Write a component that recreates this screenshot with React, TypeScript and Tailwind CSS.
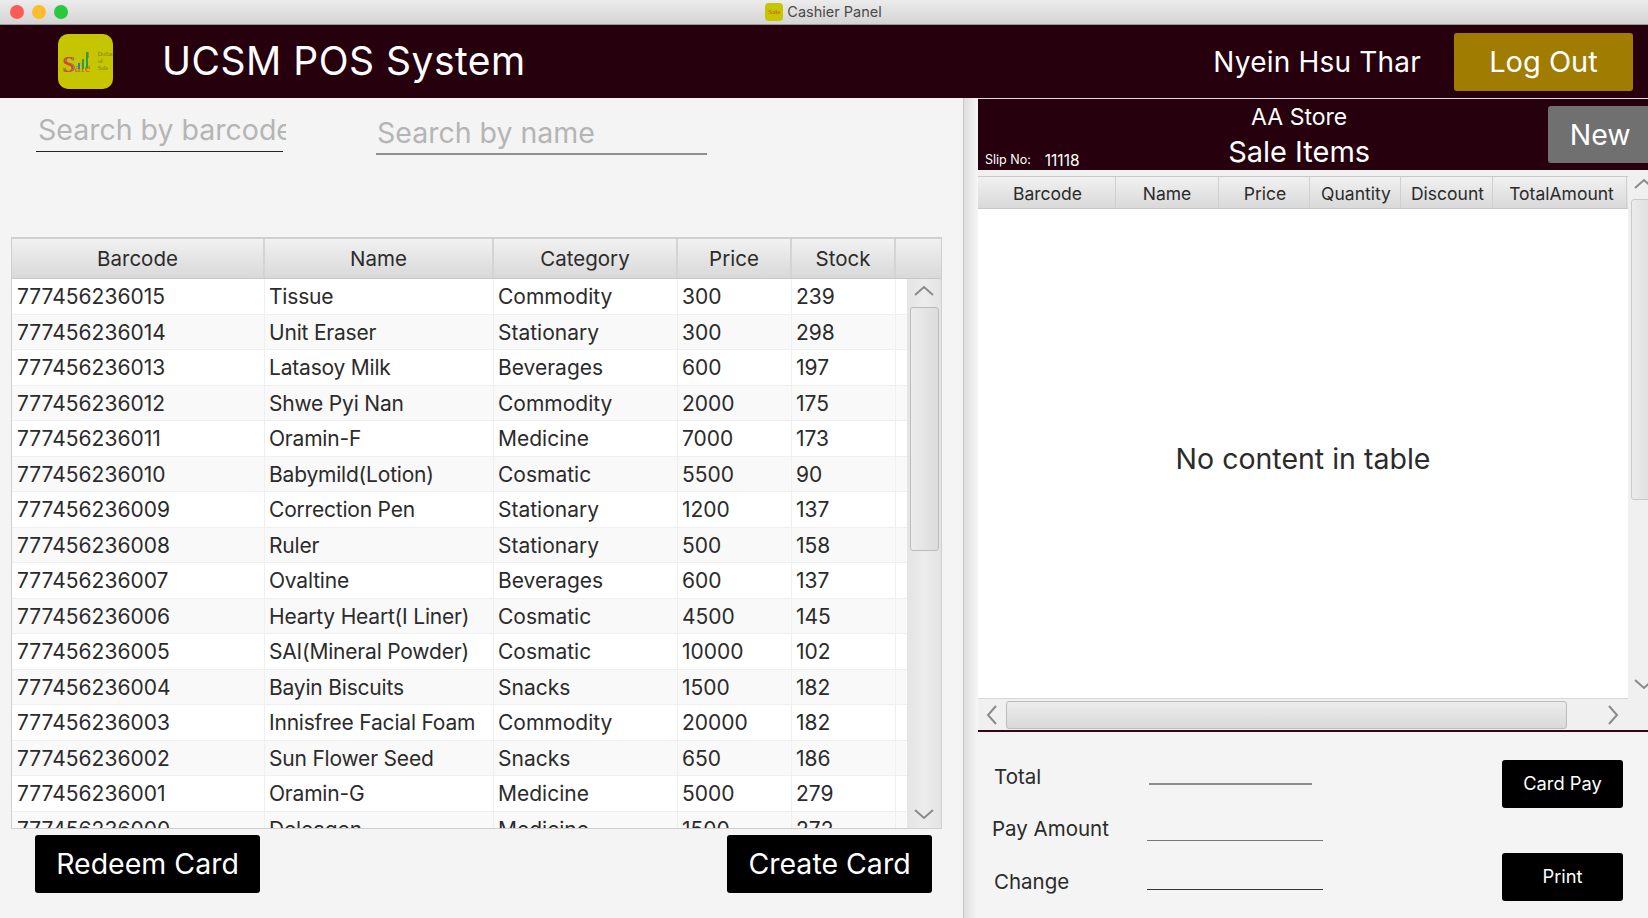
const PRODUCTS = [
  ["777456236015", "Tissue", "Commodity", "300", "239"],
  ["777456236014", "Unit Eraser", "Stationary", "300", "298"],
  ["777456236013", "Latasoy Milk", "Beverages", "600", "197"],
  ["777456236012", "Shwe Pyi Nan", "Commodity", "2000", "175"],
  ["777456236011", "Oramin-F", "Medicine", "7000", "173"],
  ["777456236010", "Babymild(Lotion)", "Cosmatic", "5500", "90"],
  ["777456236009", "Correction Pen", "Stationary", "1200", "137"],
  ["777456236008", "Ruler", "Stationary", "500", "158"],
  ["777456236007", "Ovaltine", "Beverages", "600", "137"],
  ["777456236006", "Hearty Heart(I Liner)", "Cosmatic", "4500", "145"],
  ["777456236005", "SAI(Mineral Powder)", "Cosmatic", "10000", "102"],
  ["777456236004", "Bayin Biscuits", "Snacks", "1500", "182"],
  ["777456236003", "Innisfree Facial Foam", "Commodity", "20000", "182"],
  ["777456236002", "Sun Flower Seed", "Snacks", "650", "186"],
  ["777456236001", "Oramin-G", "Medicine", "5000", "279"],
  ["777456236000", "Deleagon", "Medicine", "1500", "272"],
];

const LEFT_COLS = ["w-[253px]", "w-[229px]", "w-[184px]", "w-[114px]", "w-[104px]"];
const LEFT_HEAD = ["Barcode", "Name", "Category", "Price", "Stock"];
const SALE_COLS = [
  ["Barcode", "w-[138px] pl-[2px]"],
  ["Name", "w-[103px]"],
  ["Price", "w-[91px] pl-[2px]"],
  ["Quantity", "w-[91px] pl-[2px]"],
  ["Discount", "w-[92px] pl-[2px]"],
  ["TotalAmount", "w-[134px] pl-[4px]"],
];

// native looking scrollbar arrows, wider and flatter than the lucide chevrons
function ArrowV({ down, className }: { down?: boolean; className?: string }) {
  return (
    <svg width="20" height="12" viewBox="0 0 20 12" className={`shrink-0 ${className ?? ""}`}>
      <path d={down ? "M1 2 L10 10 L19 2" : "M1 10 L10 2 L19 10"} fill="none" stroke="#8a8a8a" strokeWidth="2" />
    </svg>
  );
}

function ArrowH({ right, className }: { right?: boolean; className?: string }) {
  return (
    <svg width="12" height="20" viewBox="0 0 12 20" className={`shrink-0 ${className ?? ""}`}>
      <path d={right ? "M2 1 L10 10 L2 19" : "M10 1 L2 10 L10 19"} fill="none" stroke="#8a8a8a" strokeWidth="2" />
    </svg>
  );
}

function Logo() {
  return (
    <div className="w-[55px] h-[55px] rounded-[10px] bg-[#c6c600] flex items-center pl-[4px] font-['Liberation_Serif',serif]">
      <div className="relative w-[35px] flex items-baseline leading-none pt-[5px]">
        <span className="text-[23px] text-[#e8401c] [text-shadow:1px_0_#2f7fd0]">S</span>
        <span className="text-[13px] text-[#d85a10] tracking-[0.3px]">ale</span>
        <svg width="14" height="17" viewBox="0 0 14 17" className="absolute left-[14px] top-[4px]">
          <rect x="2" y="11" width="2" height="6" fill="#2f7fd0" />
          <rect x="6" y="7" width="2" height="10" fill="#23a04a" />
          <rect x="10" y="0" width="2" height="16" fill="#23a04a" />
          <rect x="12" y="0" width="1" height="6" fill="#e07a10" />
        </svg>
      </div>
      <div className="ml-[3px] text-[6px] leading-[7px] text-[#77773a]">
        <div>Dollar</div>
        <div>of</div>
        <div>Sale</div>
      </div>
    </div>
  );
}

function App() {
  return (
    <div className="w-[1648px] h-[918px] overflow-hidden flex flex-col bg-[#f4f4f4] font-['Inter',sans-serif] text-[#2b2b2b]">
      {/* Window title bar */}
      <div className="h-[25px] shrink-0 relative flex items-center justify-center bg-gradient-to-b from-[#ececec] to-[#d4d4d4] border-b border-[#9a9a9a]">
        <div className="absolute left-[10px] top-[5px] flex gap-[8px]">
          <div className="w-[14px] h-[14px] rounded-full bg-[#fc5b57]" />
          <div className="w-[14px] h-[14px] rounded-full bg-[#fdbc2e]" />
          <div className="w-[14px] h-[14px] rounded-full bg-[#2ac83f]" />
        </div>
        <div className="flex items-center gap-[4px] text-[14.5px] text-[#4a4a4a] -ml-[1px]">
          <div className="w-[18px] h-[18px] rounded-[4px] bg-[#c6c600] flex items-center justify-center text-[7px] leading-none text-[#c8501c] font-['Liberation_Serif',serif]">
            Sale
          </div>
          Cashier Panel
        </div>
      </div>

      {/* App header */}
      <div className="h-[73px] shrink-0 bg-[#26000d] flex items-center text-white">
        <div className="ml-[58px]">
          <Logo />
        </div>
        <div className="ml-[49px] text-[39px] tracking-[0.5px]">UCSM POS System</div>
        <div className="ml-auto text-[28px] tracking-[0.2px]">Nyein Hsu Thar</div>
        <button className="ml-[33px] mr-[15px] w-[179px] h-[58px] rounded-[3px] bg-[#a07c00] text-[29px]">Log Out</button>
      </div>

      <div className="flex-1 flex min-h-0">
        {/* Left side: product search and list */}
        <div className="w-[963px] shrink-0 pl-[11px] flex flex-col">
          <div className="h-[139px] shrink-0 flex items-start">
            <div className="ml-[25px] w-[250px]">
              <div className="h-[53px] overflow-hidden pt-[15px] pl-[2px] text-[28.5px] leading-[34px] text-[#b5b5b5] whitespace-nowrap">
                Search by barcode
              </div>
              <div className="w-[247px] h-[1px] bg-[#222222]" />
            </div>
            <div className="ml-[90px] w-[331px] h-[57px] border-b-2 border-[#8f8f8f] pt-[18px] pl-[1px] text-[28.5px] leading-[34px] text-[#b5b5b5]">
              Search by name
            </div>
          </div>

          <div className="w-[931px] h-[592px] shrink-0 border border-[#cfcfcf] border-t-2 flex flex-col overflow-hidden">
            <div className="h-[40px] shrink-0 flex bg-gradient-to-b from-[#f1f1f1] to-[#d9d9d9] border-b border-[#c8c8c8] text-[20.5px]">
              {LEFT_HEAD.map((h, i) => (
                <div key={h} className={`${LEFT_COLS[i]} pt-[2px] flex items-center justify-center border-r-2 border-[#d4d4d4]`}>
                  {h}
                </div>
              ))}
            </div>
            <div className="flex-1 min-h-0 flex">
              <div className="w-[895px] shrink-0 overflow-hidden">
                {PRODUCTS.map((row, r) => (
                  <div key={row[0]} className={`h-[35.5px] flex border-b border-[#efefef] text-[21px] ${r % 2 ? "bg-[#f9f9f9]" : "bg-white"}`}>
                    {row.map((cell, i) => (
                      <div key={i} className={`${LEFT_COLS[i]} pt-[1px] flex items-center border-r border-[#efefef] whitespace-nowrap ${i === 0 ? "pl-[5px]" : "pl-[4px]"} ${i === 1 ? "tracking-[-0.2px]" : ""}`}>
                        {cell}
                      </div>
                    ))}
                    <div className="flex-1" />
                  </div>
                ))}
              </div>
              <div className="flex-1 flex flex-col items-center bg-gradient-to-r from-[#e4e4e4] via-[#ececec] to-[#e4e4e4]">
                <ArrowV className="mt-[6px]" />
                <div className="mt-[10px] w-[29px] h-[244px] rounded-[3px] border border-[#bcbcbc] bg-gradient-to-r from-[#ececec] to-[#dcdcdc]" />
                <ArrowV down className="mt-auto mb-[8px]" />
              </div>
            </div>
          </div>

          <div className="w-[931px] flex justify-between pl-[24px] pr-[10px] pt-[6px] text-white text-[28.5px]">
            <button className="w-[225px] h-[58px] rounded-[3px] bg-black pt-[1px]">Redeem Card</button>
            <button className="w-[205px] h-[58px] rounded-[3px] bg-black pt-[1px]">Create Card</button>
          </div>
        </div>

        {/* Splitter */}
        <div className="w-[15px] shrink-0 border-l border-[#c8c8c8] bg-gradient-to-r from-[#dedede] to-[#f6f6f6]" />

        {/* Right side: current sale */}
        <div className="flex-1 min-w-0 flex flex-col">
          <div className="h-[72px] shrink-0 bg-[#26000d] border-t border-[#dddddd] flex text-white relative">
            <div className="absolute left-[7px] -bottom-[2px] flex items-center gap-[14px] text-[12.5px]">
              <span>Slip No:</span>
              <span className="text-[15.5px]">11118</span>
            </div>
            <div className="w-[644px] pt-[4px] flex flex-col items-center">
              <div className="text-[23px] leading-[28px]">AA Store</div>
              <div className="text-[29px] leading-[36px] mt-[3px]">Sale Items</div>
            </div>
            <button className="mt-[7px] ml-[-72px] w-[100px] h-[57px] rounded-l-[3px] bg-[#707070] text-[28.5px] pl-[4px] pt-[1px]">New</button>
          </div>

          <div className="h-[560px] shrink-0 flex bg-[#f0f0f0]">
            <div className="w-[650px] shrink-0 flex flex-col">
              <div className="h-[33px] mt-[6px] shrink-0 flex bg-gradient-to-b from-[#f1f1f1] to-[#d9d9d9] border-t border-b border-[#c8c8c8] text-[17.5px]">
                {SALE_COLS.map(([h, w]) => (
                  <div key={h} className={`${w} pt-[3px] flex items-center justify-center border-r border-[#cfcfcf] whitespace-nowrap`}>
                    {h}
                  </div>
                ))}
              </div>
              <div className="flex-1 bg-white flex items-center justify-center pt-[12px] text-[28.5px]">No content in table</div>
              <div className="h-[32px] shrink-0 flex items-center border-t border-[#d8d8d8]">
                <ArrowH className="ml-[8px]" />
                <div className="ml-[8px] w-[561px] h-[28px] rounded-[3px] border border-[#bcbcbc] bg-gradient-to-b from-[#ececec] to-[#d9d9d9]" />
                <ArrowH right className="ml-[40px]" />
              </div>
            </div>
            <div className="flex-1 flex flex-col overflow-hidden">
              <ArrowV className="mt-[8px] ml-[6px]" />
              <div className="mt-[9px] ml-[3px] w-[24px] h-[301px] shrink-0 rounded-[3px] border border-[#c9c9c9] bg-gradient-to-r from-[#ececec] to-[#dcdcdc]" />
              <ArrowV down className="mt-[178px] ml-[6px]" />
            </div>
          </div>

          <div className="h-[2px] shrink-0 bg-[#3a0416]" />

          <div className="flex-1 min-h-0 flex text-[20.5px]">
            <div className="w-[524px] shrink-0 pl-[14px] pt-[3px]">
              <div className="flex h-[50px]">
                <div className="w-[157px] pl-[2px] pt-[28px] leading-[28px]">Total</div>
                <div className="w-[163px] h-[50px] border-b-2 border-[#8c8c8c]" />
              </div>
              <div className="flex h-[56px]">
                <div className="w-[155px] pt-[30px] leading-[28px] whitespace-nowrap">Pay Amount</div>
                <div className="w-[176px] h-[56px] border-b border-[#777777]" />
              </div>
              <div className="flex h-[49px]">
                <div className="w-[155px] pl-[2px] pt-[27px] leading-[28px]">Change</div>
                <div className="w-[176px] h-[49px] border-b border-[#333333]" />
              </div>
            </div>
            <div className="flex flex-col pt-[28px] gap-[45px] text-white text-[18.3px]">
              <button className="w-[121px] h-[48px] rounded-[3px] bg-black">Card Pay</button>
              <button className="w-[121px] h-[48px] rounded-[3px] bg-black">Print</button>
            </div>
          </div>
        </div>
      </div>
    </div>
  );
}

export default App;
